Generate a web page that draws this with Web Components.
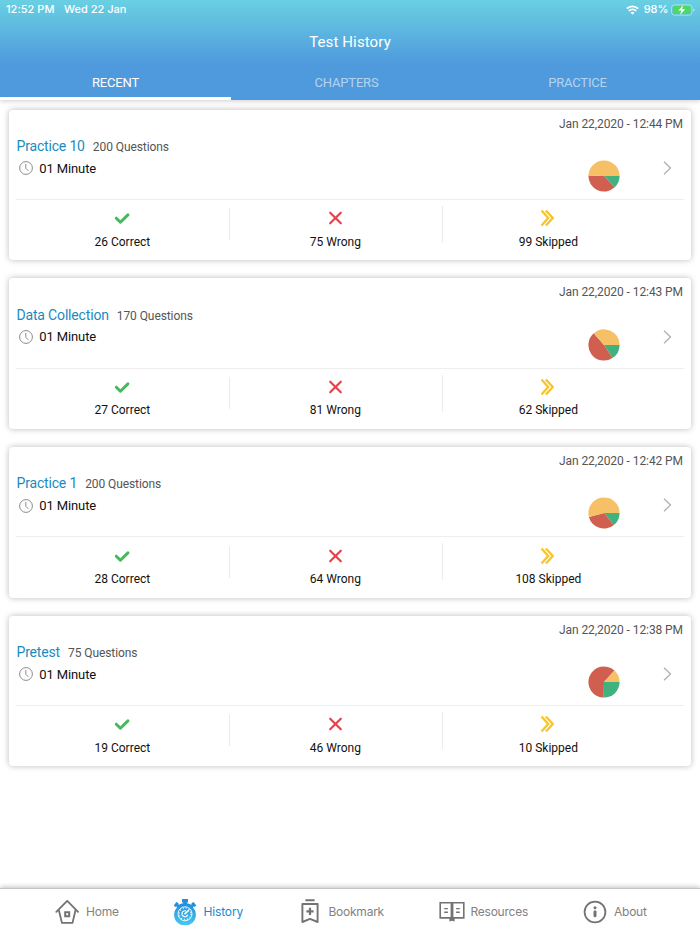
<!DOCTYPE html>
<html lang="en">
<head>
<meta charset="utf-8">
<title>Test History</title>
<style>
    body {
        margin: 0;
        background: #fff;
        font-family: Roboto, "Liberation Sans", sans-serif;
    }
</style>
</head>
<body>
<history-app></history-app>

<script>
class StatusBar extends HTMLElement {

    constructor() {
        super();
        this.attachShadow({ mode: "open" });

        this.shadowRoot.innerHTML = `
            <style>
                :host {
                    display: flex;
                    align-items: center;
                    height: 19px;
                    padding: 0 5px 0 6px;
                    box-sizing: border-box;
                    color: #fff;
                    font: 500 11px/19px Inter, sans-serif;
                    letter-spacing: 0.02px;
                }

                .date {
                    margin-left: 9.5px;
                }

                .wifi {
                    margin: 0 5px 0 auto;
                }

                .battery {
                    margin-left: 2.5px;
                }
            </style>

            <span>12:52 PM</span>
            <span class="date">Wed 22 Jan</span>
            <svg class="wifi" width="13" height="10" viewBox="0 0 13 10" fill="none" stroke="#fff" stroke-width="1.9">
                <path d="M.8 3.7a8.1 8.1 0 0 1 11.4 0M2.8 5.9a5.2 5.2 0 0 1 7.4 0"/>
                <path d="M6.5 9.6 4.5 7.7a2.9 2.9 0 0 1 4 0z" fill="#fff" stroke="none"/>
            </svg>
            <span>98%</span>
            <svg class="battery" width="24" height="12" viewBox="0 0 24 12">
                <rect x=".5" y=".8" width="20.5" height="10.4" rx="3" fill="none" stroke="#fff" stroke-opacity=".4"/>
                <rect x="1.8" y="2.1" width="17.9" height="7.8" rx="1.8" fill="#4cd964"/>
                <path d="M22.2 4.2q1.4.5 1.4 1.8t-1.4 1.8z" fill="#fff" fill-opacity=".5"/>
                <path d="M12.2 1.3 7.3 6.6h3.1L9 10.9l5.2-5.6H11z" fill="#fff"/>
            </svg>
        `;
    }
}

class HistoryTab extends HTMLElement {

    constructor() {
        super();
        this.attachShadow({ mode: "open" });

        this.shadowRoot.innerHTML = `
            <style>
                :host {
                    display: block;
                    width: 231px;
                    height: 37px;
                    box-sizing: border-box;
                    text-align: center;
                    color: #b3d4f1;
                    font-size: 13px;
                    line-height: 39px;
                    letter-spacing: -0.2px;
                    border-bottom: 3px solid transparent;
                }

                :host([active]) {
                    color: #fff;
                    border-bottom-color: #fff;
                }
            </style>

            <slot></slot>
        `;
    }
}

class PieChart extends HTMLElement {

    constructor() {
        super();
        this.attachShadow({ mode: "open" });
    }

    connectedCallback() {
        const values = this.getAttribute("values").split(",").map(Number);
        const colors = ["#40b17f", "#d15f50", "#f6c067"];
        const total = values.reduce((sum, v) => sum + v, 0);
        const point = (share) => {
            const angle = share * Math.PI * 2;
            return `${(16 + 15.6 * Math.cos(angle)).toFixed(2)} ${(16 + 15.6 * Math.sin(angle)).toFixed(2)}`;
        };

        // slices run clockwise from three o'clock
        let start = 0;
        const slices = values.map((value, i) => {
            const end = start + value / total;
            const large = end - start > 0.5 ? 1 : 0;
            const path = `<path fill="${colors[i]}" d="M16 16L${point(start)}A15.6 15.6 0 ${large} 1 ${point(end)}Z"/>`;
            start = end;
            return path;
        }).join("");

        this.shadowRoot.innerHTML = `
            <style>
                :host {
                    display: block;
                    width: 32px;
                    height: 32px;
                }

                svg {
                    display: block;
                }
            </style>
            <svg width="32" height="32" viewBox="0 0 32 32">${slices}</svg>
        `;
    }
}

class ResultCount extends HTMLElement {

    constructor() {
        super();
        this.attachShadow({ mode: "open" });
    }

    connectedCallback() {
        const icons = {
            correct: `<path d="m3.3 10.2 4.1 4 7.5-7.3" fill="none" stroke="#45b95b" stroke-width="3" stroke-linecap="round" stroke-linejoin="round"/>`,
            wrong: `<path d="m4.2 4.7 10.6 10.6m0-10.6L4.2 15.3" fill="none" stroke="#e8414b" stroke-width="2.2" stroke-linecap="round"/>`,
            skipped: `<path d="M2.5 2.4 9.2 10l-6.7 7.6M6.9 2.4 13.8 10l-6.9 7.6" fill="none" stroke="#f8c42c" stroke-width="2.3"/>`
        };

        this.shadowRoot.innerHTML = `
            <style>
                :host {
                    display: flex;
                    flex-direction: column;
                    align-items: center;
                    padding: 8.5px 0.3px 0 0;
                    font-size: 12px;
                    line-height: 16px;
                    color: #111;
                }

                svg {
                    display: block;
                    margin: 0 0.7px 5.2px 0;
                }
            </style>
            <svg width="18" height="20" viewBox="0 0 18 20">${icons[this.getAttribute("kind")]}</svg>
            <slot></slot>
        `;
    }
}

class TestCard extends HTMLElement {

    constructor() {
        super();
        this.attachShadow({ mode: "open" });
    }

    connectedCallback() {
        const get = (name) => this.getAttribute(name);

        this.shadowRoot.innerHTML = `
            <style>
                :host {
                    display: block;
                    height: 150.7px;
                    box-sizing: border-box;
                    padding: 0 7px;
                    background: #fff;
                    border-radius: 4px;
                    box-shadow: 0 0 6px rgba(0, 0, 0, 0.27);
                }

                .date {
                    height: 26.4px;
                    padding-right: 1px;
                    text-align: right;
                    font-size: 12px;
                    line-height: 29.4px;
                    letter-spacing: -0.08px;
                    color: #555;
                }

                .main {
                    display: flex;
                    height: 62.9px;
                    border-bottom: 1px solid #eee;
                }

                .info {
                    flex: 1;
                }

                .title {
                    display: flex;
                    align-items: baseline;
                    gap: 8px;
                    height: 20.3px;
                    padding-left: 0.5px;
                    line-height: 20px;
                    font-size: 14px;
                    letter-spacing: -0.17px;
                    color: #1a8bbf;
                }

                .title small {
                    font-size: 12px;
                    letter-spacing: -0.08px;
                    color: #555;
                }

                .time {
                    display: flex;
                    align-items: center;
                    gap: 6.3px;
                    height: 24px;
                    padding-left: 3px;
                    font-size: 13px;
                    letter-spacing: -0.12px;
                    color: #111;
                }

                pie-chart {
                    margin: 24.1px 42px 0 0;
                }

                .chevron {
                    margin: 25.1px 12px 0 0;
                }

                .results {
                    display: grid;
                    grid-template-columns: repeat(3, 213px);
                    height: 56px;
                }

                .results > * + * {
                    background: linear-gradient(#ececec, #ececec) 0 6px / 1px 37px no-repeat;
                }

                .results > :nth-child(2) {
                    background-position-y: 8.5px;
                    background-size: 1px 32px;
                }
            </style>

            <div class="date">${get("date")}</div>
            <div class="main">
                <div class="info">
                    <div class="title"><span>${get("name")}</span><small>${get("questions")} Questions</small></div>
                    <div class="time">
                        <svg width="14" height="14" viewBox="0 0 14 14" fill="none" stroke="#8b8b8b">
                            <circle cx="7" cy="7" r="6.4"/>
                            <path d="M6.8 3v4.3l2.5 2.5"/>
                        </svg>
                        <span>${get("time")}</span>
                    </div>
                </div>
                <pie-chart values="${get("correct")},${get("wrong")},${get("skipped")}"></pie-chart>
                <svg class="chevron" width="10" height="14" viewBox="0 0 10 14" fill="none" stroke="#b0b0b0" stroke-width="1.3">
                    <path d="m2 .7 6.5 6.3L2 13.3"/>
                </svg>
            </div>
            <div class="results">
                <result-count kind="correct">${get("correct")} Correct</result-count>
                <result-count kind="wrong">${get("wrong")} Wrong</result-count>
                <result-count kind="skipped">${get("skipped")} Skipped</result-count>
            </div>
        `;
    }
}

class NavItem extends HTMLElement {

    constructor() {
        super();
        this.attachShadow({ mode: "open" });
    }

    connectedCallback() {
        const icons = {
            home: `
                <g fill="none" stroke="#737373" stroke-width="1.8">
                    <path d="M2.3 12.9 13.2 1.9l10.9 11M4.9 11.3l3 12.6h10.6l3-12.6" stroke-linejoin="round" stroke-linecap="round"/>
                    <path d="M11.2 13.2h4v4h-4z" stroke-width="2"/>
                </g>`,
            history: `
                <defs>
                    <linearGradient id="fill" x1="0" y1="0" x2="0" y2="1">
                        <stop offset=".2" stop-color="#248fdd"/>
                        <stop offset="1" stop-color="#49cbee"/>
                    </linearGradient>
                </defs>
                <path fill="url(#fill)" d="M10 0h6v3.4h-1.2v.8a10.9 10.9 0 0 1 4.3 1.6l.7-.8-.4-.7 2.2-1.3 2.7 3.4-1.9 1.6-.8-.5-.7.7A10.9 10.9 0 1 1 5.1 8.2l-.7-.7-.8.5-1.9-1.6L4.4 3l2.2 1.3-.4.7.7.8a10.9 10.9 0 0 1 4.3-1.6v-.8H10z"/>
                <g fill="none" stroke="#fff">
                    <circle cx="13" cy="14.8" r="7" stroke-width=".9"/>
                    <circle cx="13" cy="14.8" r="5.9" stroke-width="1.5" stroke-dasharray=".9 2.19"/>
                    <path d="M15.8 15.8a3 3 0 1 1-1.7-3.8" stroke-width="1.1"/>
                    <path d="m12.5 15.1 4.5-4" stroke-width="1.6"/>
                </g>`,
            bookmark: `
                <g fill="none" stroke="#737373" stroke-width="1.9">
                    <path d="M8.4 1.2h9.2M5.4 5h15.2v18L13 19.9 5.4 23z" stroke-linejoin="round"/>
                    <path d="M13 8.7v7.2M9.4 12.3h7.2" stroke-width="2.2"/>
                </g>`,
            resources: `
                <g fill="none" stroke="#737373" stroke-width="1.6">
                    <path d="M1.2 3.7h23.6v15.2H1.2z"/>
                    <path d="M13 4v16" stroke-width="2.8"/>
                    <path d="M5.2 9.6h3.7m-3.7 3.6h3.7m8.2-3.6h3.7m-3.7 3.6h3.7" stroke-width="1.4"/>
                    <path d="M10.4 18.9h5.2v3.7L13 21.7l-2.6.9z" fill="#737373" stroke="none"/>
                </g>`,
            about: `
                <circle cx="13" cy="13" r="10.4" fill="none" stroke="#737373" stroke-width="1.8"/>
                <path d="M13 12.8v4" fill="none" stroke="#737373" stroke-width="3" stroke-linecap="round"/>
                <circle cx="13" cy="8.8" r="1.5" fill="#737373"/>`
        };

        this.shadowRoot.innerHTML = `
            <style>
                :host {
                    display: flex;
                    align-items: center;
                    gap: 6px;
                    color: #828282;
                    font: 400 12px/16px Inter, sans-serif;
                    letter-spacing: -0.24px;
                }

                :host([active]) {
                    color: #158bcf;
                    letter-spacing: -0.15px;
                }

                svg {
                    display: block;
                }
            </style>
            <svg width="26" height="26" viewBox="0 0 26 26">${icons[this.getAttribute("icon")]}</svg>
            <slot></slot>
        `;
    }
}

class HistoryApp extends HTMLElement {

    constructor() {
        super();
        this.attachShadow({ mode: "open" });

        this.tests = [
            { name: "Practice 10", questions: 200, date: "Jan 22,2020 - 12:44 PM", correct: 26, wrong: 75, skipped: 99 },
            { name: "Data Collection", questions: 170, date: "Jan 22,2020 - 12:43 PM", correct: 27, wrong: 81, skipped: 62 },
            { name: "Practice 1", questions: 200, date: "Jan 22,2020 - 12:42 PM", correct: 28, wrong: 64, skipped: 108 },
            { name: "Pretest", questions: 75, date: "Jan 22,2020 - 12:38 PM", correct: 19, wrong: 46, skipped: 10 }
        ];

        this.shadowRoot.innerHTML = `
            <style>
                :host {
                    display: flex;
                    flex-direction: column;
                    height: 100vh;
                    overflow: hidden;
                }

                header {
                    height: 100px;
                    background: linear-gradient(#69d0e2, #4f9add 64px);
                    box-shadow: 0 1px 5px rgba(0, 0, 0, 0.2);
                }

                h1 {
                    margin: 0;
                    height: 44px;
                    text-align: center;
                    color: #fff;
                    font-size: 15px;
                    font-weight: 400;
                    line-height: 46px;
                    letter-spacing: 0.12px;
                }

                .tabs {
                    display: flex;
                }

                main {
                    flex: 1;
                    display: flex;
                    flex-direction: column;
                    gap: 18px;
                    padding: 9.6px 9px 0;
                }

                nav {
                    display: grid;
                    grid-template-columns: 117.5px 125px 142px 143.5px 1fr;
                    height: 46px;
                    box-sizing: border-box;
                    padding-left: 54px;
                    border-top: 1px solid #c4c4c4;
                    background: #fff;
                    box-shadow: 0 -1px 5px rgba(0, 0, 0, 0.25);
                }
            </style>

            <header>
                <status-bar></status-bar>
                <h1>Test History</h1>
                <div class="tabs">
                    <history-tab active>RECENT</history-tab>
                    <history-tab>CHAPTERS</history-tab>
                    <history-tab>PRACTICE</history-tab>
                </div>
            </header>
            <main></main>
            <nav>
                <nav-item icon="home">Home</nav-item>
                <nav-item icon="history" active>History</nav-item>
                <nav-item icon="bookmark">Bookmark</nav-item>
                <nav-item icon="resources">Resources</nav-item>
                <nav-item icon="about">About</nav-item>
            </nav>
        `;
    }

    connectedCallback() {
        this.render();
    }

    render() {
        this.shadowRoot.querySelector("main").innerHTML = this.tests.map(test => `
            <test-card name="${test.name}" questions="${test.questions}" date="${test.date}" time="01 Minute"
                correct="${test.correct}" wrong="${test.wrong}" skipped="${test.skipped}"></test-card>
        `).join("");
    }
}

customElements.define("status-bar", StatusBar);
customElements.define("history-tab", HistoryTab);
customElements.define("pie-chart", PieChart);
customElements.define("result-count", ResultCount);
customElements.define("test-card", TestCard);
customElements.define("nav-item", NavItem);
customElements.define("history-app", HistoryApp);
</script>
</body>
</html>
